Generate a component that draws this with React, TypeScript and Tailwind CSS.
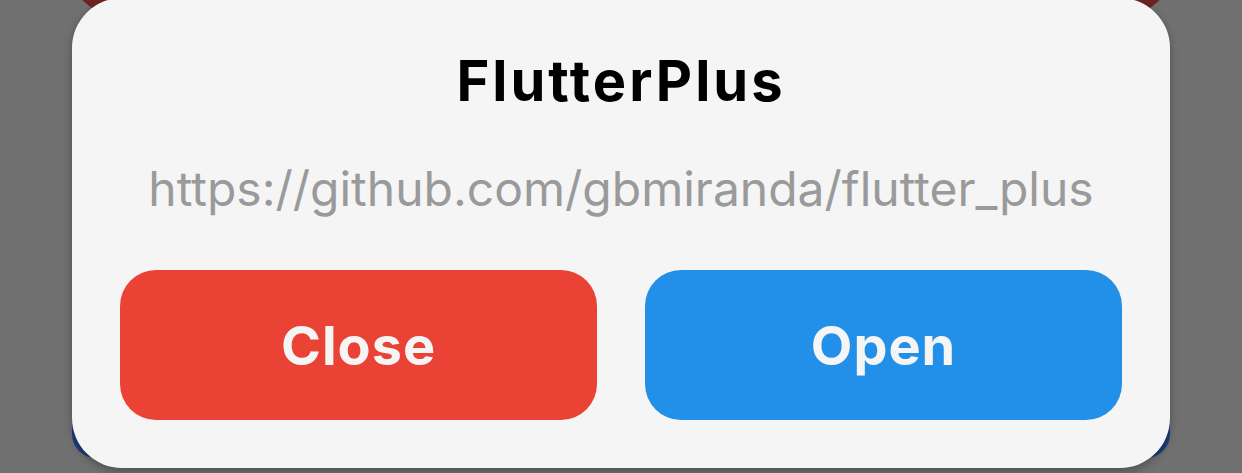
export default function App() {
  return (
    <div className="relative h-[473px] w-[1242px] overflow-hidden bg-[#707070] font-['Inter',sans-serif]">
      {/* page content behind the overlay */}
      <div className="absolute left-[74px] right-[74px] top-[-60px] h-[73px] rounded-[40px] bg-[#6e2323]" />
      <div className="absolute bottom-[15px] left-[72px] right-[72px] h-[120px] rounded-[24px] bg-[#1c3f78]" />

      <div className="absolute left-[72px] top-[-2px] flex h-[470px] w-[1098px] flex-col items-center rounded-[50px] bg-[#f5f5f5] shadow-[0_3px_8px_rgba(0,0,0,0.3)]">
        <h1 className="mt-[55px] text-[56px] font-bold leading-[56px] tracking-[3px] text-black">FlutterPlus</h1>
        <p className="mt-[56px] text-[48px] leading-[48px] text-[#9a9a9a]">
          https://github.com/gbmiranda/flutter_plus
        </p>
        <div className="mt-[57px] flex w-full gap-[48px] px-[48px]">
          <button className="flex h-[150px] flex-1 items-center justify-center rounded-[36px] bg-[#ea4335] text-[54px] font-bold tracking-[1px] text-[#f5f5f5]">
            Close
          </button>
          <button className="flex h-[150px] flex-1 items-center justify-center rounded-[36px] bg-[#2290e8] text-[54px] font-bold tracking-[1px] text-[#f5f5f5]">
            Open
          </button>
        </div>
      </div>
    </div>
  );
}
